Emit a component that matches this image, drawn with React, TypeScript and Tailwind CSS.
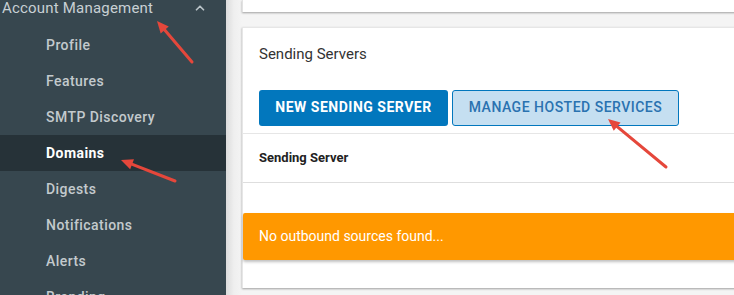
import { ChevronUp } from 'lucide-react';

const navItems = ['Profile', 'Features', 'SMTP Discovery', 'Domains', 'Digests', 'Notifications', 'Alerts', 'Branding'];

const Arrow = ({ x1, y1, x2, y2 }: { x1: number; y1: number; x2: number; y2: number }) => {
  const ang = Math.atan2(y2 - y1, x2 - x1);
  const len = 13;
  const spread = 0.42;
  const a = [x2 - len * Math.cos(ang - spread), y2 - len * Math.sin(ang - spread)];
  const b = [x2 - len * Math.cos(ang + spread), y2 - len * Math.sin(ang + spread)];
  return (
    <g>
      <line x1={x1} y1={y1} x2={x2 - 6 * Math.cos(ang)} y2={y2 - 6 * Math.sin(ang)} stroke="#e5473b" strokeWidth={3} strokeLinecap="round" />
      <polygon points={`${x2},${y2} ${a[0]},${a[1]} ${b[0]},${b[1]}`} fill="#e5473b" />
    </g>
  );
};

export default function App() {
  return (
    <div className="relative w-[734px] h-[295px] overflow-hidden flex bg-[#f4f4f4]" style={{ fontFamily: 'Roboto, "Liberation Sans", sans-serif' }}>
      <aside className="w-[226px] shrink-0 bg-[#37474f] flex flex-col">
        <div className="h-[18px] flex items-center justify-between pl-[2px] pr-[19px] -mt-[1px]">
          <span className="text-[15px] text-[#c8d0d4] tracking-[0.2px]">Account Management</span>
          <ChevronUp size={14} strokeWidth={3} className="text-[#b9c3c8]" />
        </div>
        <div className="flex flex-col mt-[10px]">
          {navItems.map((item) => (
            <div
              key={item}
              className={`h-[36px] shrink-0 flex items-center pl-[46px] text-[14px] tracking-[0.45px] ${item === 'Domains' ? 'bg-[#263238] text-white font-bold' : 'text-[#c3cacd] font-medium'}`}
            >
              {item}
            </div>
          ))}
        </div>
      </aside>
      <div className="w-[16px] shrink-0 bg-gradient-to-r from-[#dcdcdc] via-[#efefef] to-[#f4f4f4]" />
      <main className="flex-1 flex flex-col -mr-[30px]">
        <div className="h-[12px] bg-white border-l border-[#e2e2e2] shadow-[0_1px_2px_rgba(0,0,0,0.35)]" />
        <div className="mt-[15px] h-[261px] bg-white border-l border-t border-[#e6e6e6] shadow-[0_1px_2px_rgba(0,0,0,0.35)] flex flex-col">
          <div className="pl-[16px] pt-[15px] text-[15px] text-[#333]">Sending Servers</div>
          <div className="flex gap-[4px] pl-[16px] mt-[24px]">
            <button className="h-[36px] w-[189px] rounded-[3px] bg-[#0277bd] text-white text-[14px] font-bold tracking-[0.5px]">
              NEW SENDING SERVER
            </button>
            <button className="h-[36px] w-[227px] rounded-[3px] bg-[#c5dff1] border border-[#0277bd] text-[#2a72b0] text-[14px] font-medium tracking-[0.5px]">
              MANAGE HOSTED SERVICES
            </button>
          </div>
          <div className="mt-[7px] border-t border-[#e6e6e6] h-[49px] flex items-center pl-[16px] text-[13px] font-bold text-[#222]">
            Sending Server
          </div>
          <div className="border-t border-[#dedede] h-[31px]" />
          <div className="h-[47px] bg-[#ff9800] rounded-[2px] shadow-[0_2px_3px_rgba(0,0,0,0.25)] flex items-center pl-[16px] text-[14px] text-white">
            No outbound sources found...
          </div>
        </div>
      </main>
      <svg className="absolute inset-0 pointer-events-none" width={734} height={295}>
        <Arrow x1={192} y1={62} x2={157} y2={21} />
        <Arrow x1={175} y1={181} x2={121} y2={160} />
        <Arrow x1={666} y1={167} x2={608} y2={119} />
      </svg>
    </div>
  );
}
